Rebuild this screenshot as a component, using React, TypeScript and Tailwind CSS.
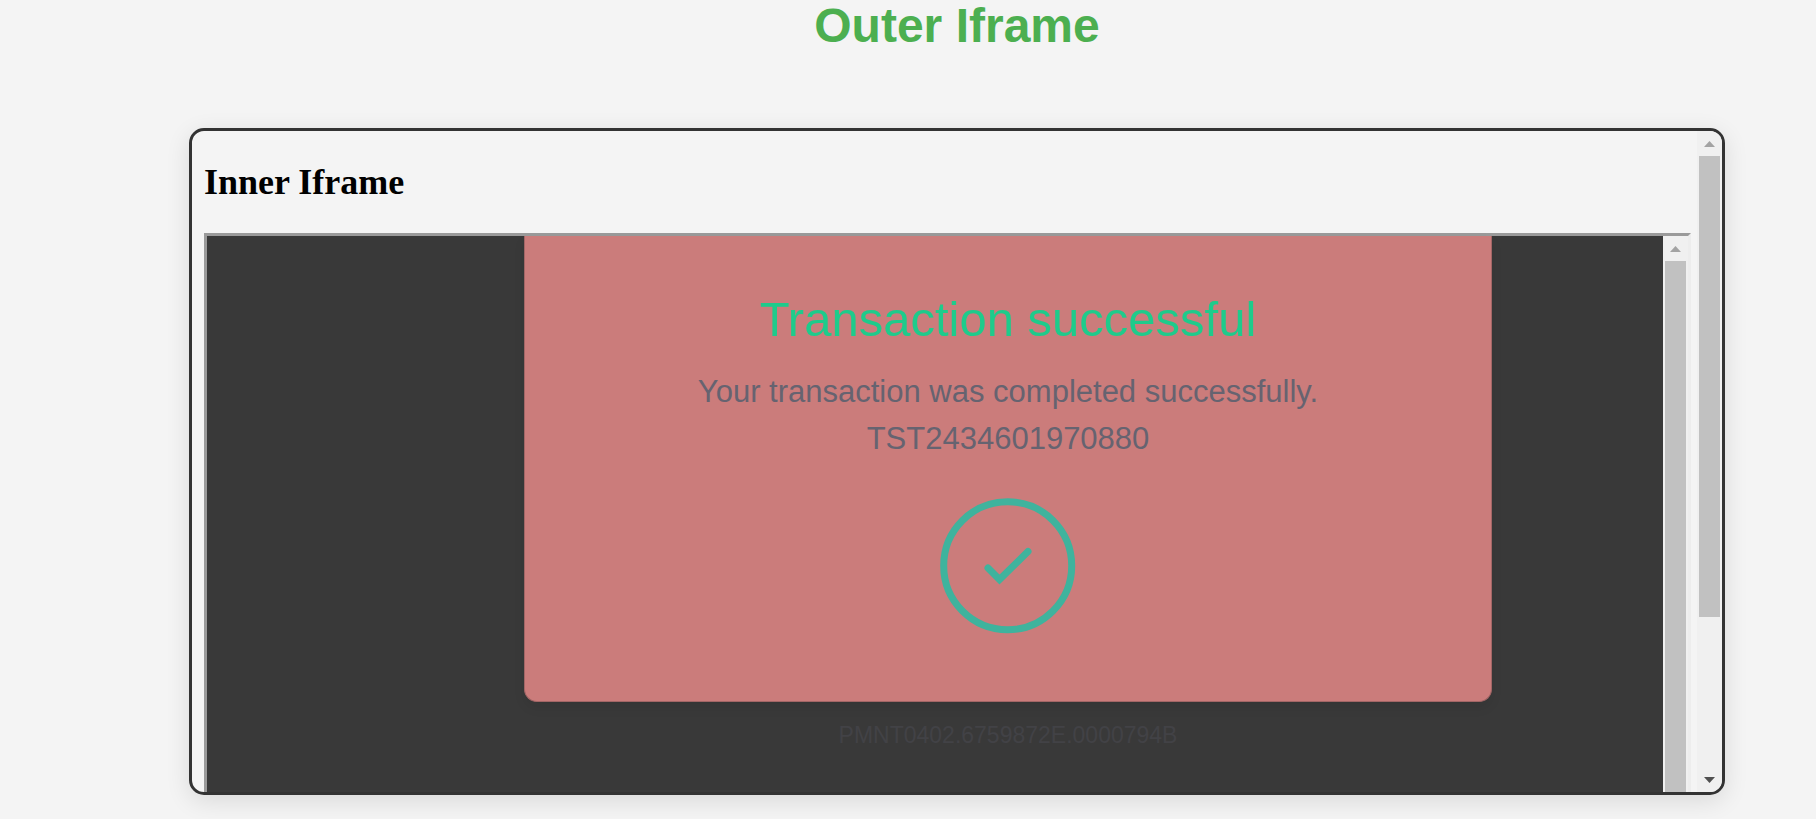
import clsx from "clsx";

const TRANSACTION_ID = "TST2434601970880";
const PAYMENT_REF = "PMNT0402.6759872E.0000794B";

const ScrollButton = ({
  direction,
  disabled,
}: {
  direction: "up" | "down";
  disabled?: boolean;
}) => (
  <button
    type="button"
    aria-label={`Scroll ${direction}`}
    disabled={disabled}
    className={clsx(
      "flex h-[25px] w-full shrink-0 items-center justify-center",
      disabled ? "text-[#a3a3a3]" : "text-[#505050]",
    )}
  >
    <svg width="11" height="6" viewBox="0 0 11 6" fill="currentColor">
      <path d={direction === "up" ? "M0 6L5.5 0L11 6Z" : "M0 0L5.5 6L11 0Z"} />
    </svg>
  </button>
);

// Both frames are scrolled to the top, so the up arrow is always disabled.
const Scrollbar = ({ thumbClass }: { thumbClass: string }) => (
  <div className="flex w-[25px] shrink-0 flex-col bg-[#f0f0f0]">
    <ScrollButton direction="up" disabled />
    <div className="grow px-[2px]">
      <div className={clsx("bg-[#c1c1c1]", thumbClass)} />
    </div>
    <ScrollButton direction="down" />
  </div>
);

const SuccessIcon = () => (
  <svg
    width="136"
    height="136"
    viewBox="0 0 136 136"
    fill="none"
    stroke="#3fb39d"
    strokeWidth="7"
    className="mx-auto mt-9"
    aria-hidden="true"
  >
    <circle cx="67.7" cy="67.7" r="64" />
    <path d="M48 70L59.5 81.5L88 53.5" strokeLinecap="round" />
  </svg>
);

const TransactionResult = () => (
  <main className="min-w-0 grow bg-[#393939] pr-[171px] pl-[317px] text-center">
    <div className="rounded-b-[13px] border border-t-0 border-[#a36666] bg-[#cb7c7b] pt-[53px] pb-[67px] shadow-[0_6px_12px_rgba(0,0,0,0.07)]">
      <h3 className="text-[49px] leading-[60px] text-[#1ecb8b]">
        Transaction successful
      </h3>
      <p className="mt-[19px] text-[31px] leading-[47px] text-[#666370]">
        Your transaction was completed successfully.
        <br />
        {TRANSACTION_ID}
      </p>
      <SuccessIcon />
    </div>
    <p className="mt-4 text-[23px] leading-[34px] text-[#424246]">
      {PAYMENT_REF}
    </p>
  </main>
);

const App = () => (
  <div className="min-h-screen bg-[#f4f4f4] pr-[91px] pb-5 pl-[189px] font-['Liberation_Sans',Arial,sans-serif]">
    <h1 className="text-center text-[48px] leading-[52px] font-bold text-[#4caf50]">
      Outer Iframe
    </h1>

    <section className="mt-[76px] flex h-[667px] overflow-hidden rounded-[15px] border-[3px] border-[#333] shadow-[0_6px_24px_rgba(0,0,0,0.11)]">
      <div className="flex min-w-0 grow flex-col pr-[6px] pl-3">
        <h2 className="py-[30px] font-['Liberation_Serif','Times_New_Roman',serif] text-[36px] leading-[42px] font-bold text-black">
          Inner Iframe
        </h2>
        {/* Taller than the outer frame, which cuts off its lower edge. */}
        <div className="flex h-[750px] shrink-0 border-[3px] border-t-[#9a9a9a] border-r-[#ededed] border-b-[#ededed] border-l-[#9a9a9a]">
          <TransactionResult />
          <Scrollbar thumbClass="h-[620px]" />
        </div>
      </div>
      <Scrollbar thumbClass="h-[461px]" />
    </section>
  </div>
);

export default App;
